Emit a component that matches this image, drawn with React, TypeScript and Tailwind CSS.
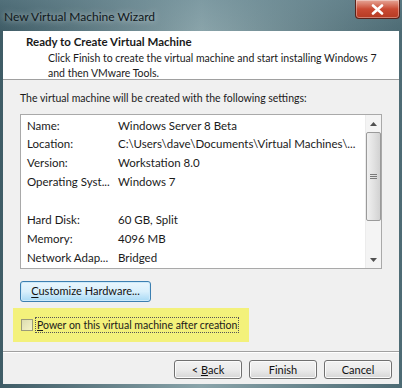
import React from 'react';

const rows: [string, string][] = [
  ['Name:', 'Windows Server 8 Beta'],
  ['Location:', 'C:\\Users\\dave\\Documents\\Virtual Machines\\...'],
  ['Version:', 'Workstation 8.0'],
  ['Operating Syst...', 'Windows 7'],
  ['', ''],
  ['Hard Disk:', '60 GB, Split'],
  ['Memory:', '4096 MB'],
  ['Network Adap...', 'Bridged'],
];

const WizardButton: React.FC<{ children: React.ReactNode }> = ({ children }) => (
  <button className="w-[68px] h-[19px] rounded-[3px] border border-[#707070] bg-gradient-to-b from-[#f2f2f2] via-[#ebebeb] to-[#d6d6d6] text-[11px] text-[#111] leading-none shadow-[inset_0_0_0_1px_#fbfbfb]">
    {children}
  </button>
);

const App: React.FC = () => {
  return (
    <div
      className="w-[402px] h-[388px] flex flex-col bg-gradient-to-r from-[#3f5c66] via-[#8aa4aa] to-[#4d6b74] overflow-hidden"
      style={{ fontFamily: 'Lato, "Open Sans", sans-serif' }}
    >
      {/* Title bar */}
      <div className="h-[31px] flex items-start justify-between pl-[4px] pr-[2px] bg-gradient-to-b from-[#6d8d98]/40 to-transparent">
        <span className="mt-[8px] text-[12px] text-[#10181b] [text-shadow:0_0_6px_rgba(255,255,255,0.7)]">
          New Virtual Machine Wizard
        </span>
        <div className="w-[45px] h-[19px] rounded-b-[4px] border border-t-0 border-[#5a2219] bg-gradient-to-b from-[#e5a597] via-[#c94a33] to-[#b63a22] flex items-center justify-center shadow-[inset_0_0_0_1px_rgba(255,255,255,0.35)]">
          <svg width="13" height="11" viewBox="0 0 13 11">
            <path d="M2 1.5 L11 9.5 M11 1.5 L2 9.5" stroke="#fff" strokeWidth="2.6" strokeLinecap="round" />
          </svg>
        </div>
      </div>

      {/* Client area */}
      <div className="mx-[3px] flex-1 mb-[4px] flex flex-col bg-[#f0f0f0] text-[10.5px] text-[#1a1a1a]">
        {/* Header */}
        <div className="h-[49px] bg-white border-b border-[#a0a0a0] pl-[23px] pt-[3px]">
          <div className="font-bold text-[11.5px] leading-[16px]">Ready to Create Virtual Machine</div>
          <div className="pl-[22px] leading-[15px] mt-[1px] whitespace-nowrap">
            <div>Click Finish to create the virtual machine and start installing Windows 7</div>
            <div>and then VMware Tools.</div>
          </div>
        </div>

        {/* Body */}
        <div className="flex-1 flex flex-col px-[17px] pt-[11px]">
          <div className="leading-[15px]">The virtual machine will be created with the following settings:</div>

          <div className="mt-[8px] h-[155px] border border-[#a9a9a9] bg-white flex text-[11.5px]">
            <div className="flex-1 pl-[6px] pt-[2px] overflow-hidden">
              {rows.map(([k, v], i) => (
                <div key={i} className={`flex items-center ${i === 0 ? 'h-[17px]' : 'h-[19px]'}`}>
                  <span className="w-[91px] shrink-0">{k}</span>
                  <span className="whitespace-nowrap">{v}</span>
                </div>
              ))}
            </div>
            {/* Scrollbar */}
            <div className="w-[16px] bg-[#f4f4f4] border-l border-[#ececec] flex flex-col items-center">
              <div className="h-[17px] flex items-center justify-center">
                <svg width="7" height="4" viewBox="0 0 7 4"><path d="M0 4 L3.5 0 L7 4 Z" fill="#505050" /></svg>
              </div>
              <div className="w-[15px] h-[89px] rounded-[2px] border border-[#9a9a9a] bg-gradient-to-r from-[#f0f0f0] via-[#e2e2e2] to-[#d2d2d2] flex flex-col items-center justify-center gap-[1px]">
                <div className="w-[7px] h-px bg-[#7a7a7a]" />
                <div className="w-[7px] h-px bg-[#7a7a7a]" />
                <div className="w-[7px] h-px bg-[#7a7a7a]" />
              </div>
              <div className="flex-1" />
              <div className="h-[17px] flex items-center justify-center">
                <svg width="7" height="4" viewBox="0 0 7 4"><path d="M0 0 L3.5 4 L7 0 Z" fill="#505050" /></svg>
              </div>
            </div>
          </div>

          <div className="mt-[12px]">
            <button className="w-[131px] h-[21px] rounded-[3px] border border-[#3c7fb1] bg-gradient-to-b from-[#eaf6fd] via-[#d9f0fc] to-[#a7d9f5] text-[11px] text-[#111] shadow-[inset_0_0_0_1px_#cdeafa]">
              <span className="underline underline-offset-2">C</span>ustomize Hardware...
            </button>
          </div>

          <div className="mt-[6px] -ml-[7px] w-[236px] h-[34px] bg-[#f3f17b] flex items-center pl-[8px]">
            <div className="w-[12px] h-[12px] border border-[#9b9b7a] bg-gradient-to-br from-[#dcdcb0] to-[#f5f4c8]" />
            <span className="ml-[2px] px-[1px] border border-dotted border-[#555] leading-[14px] text-[10.5px] whitespace-nowrap">
              <span className="underline">P</span>ower on this virtual machine after creation
            </span>
          </div>

          <div className="flex-1" />
        </div>

        {/* Footer */}
        <div className="h-[33px] border-t border-[#a0a0a0] shadow-[inset_0_1px_0_#fff] flex items-start justify-end gap-[7px] pr-[7px] pt-[8px]">
          <WizardButton>&lt; <span className="underline">B</span>ack</WizardButton>
          <WizardButton>Finish</WizardButton>
          <WizardButton>Cancel</WizardButton>
        </div>
      </div>
    </div>
  );
};

export default App;
